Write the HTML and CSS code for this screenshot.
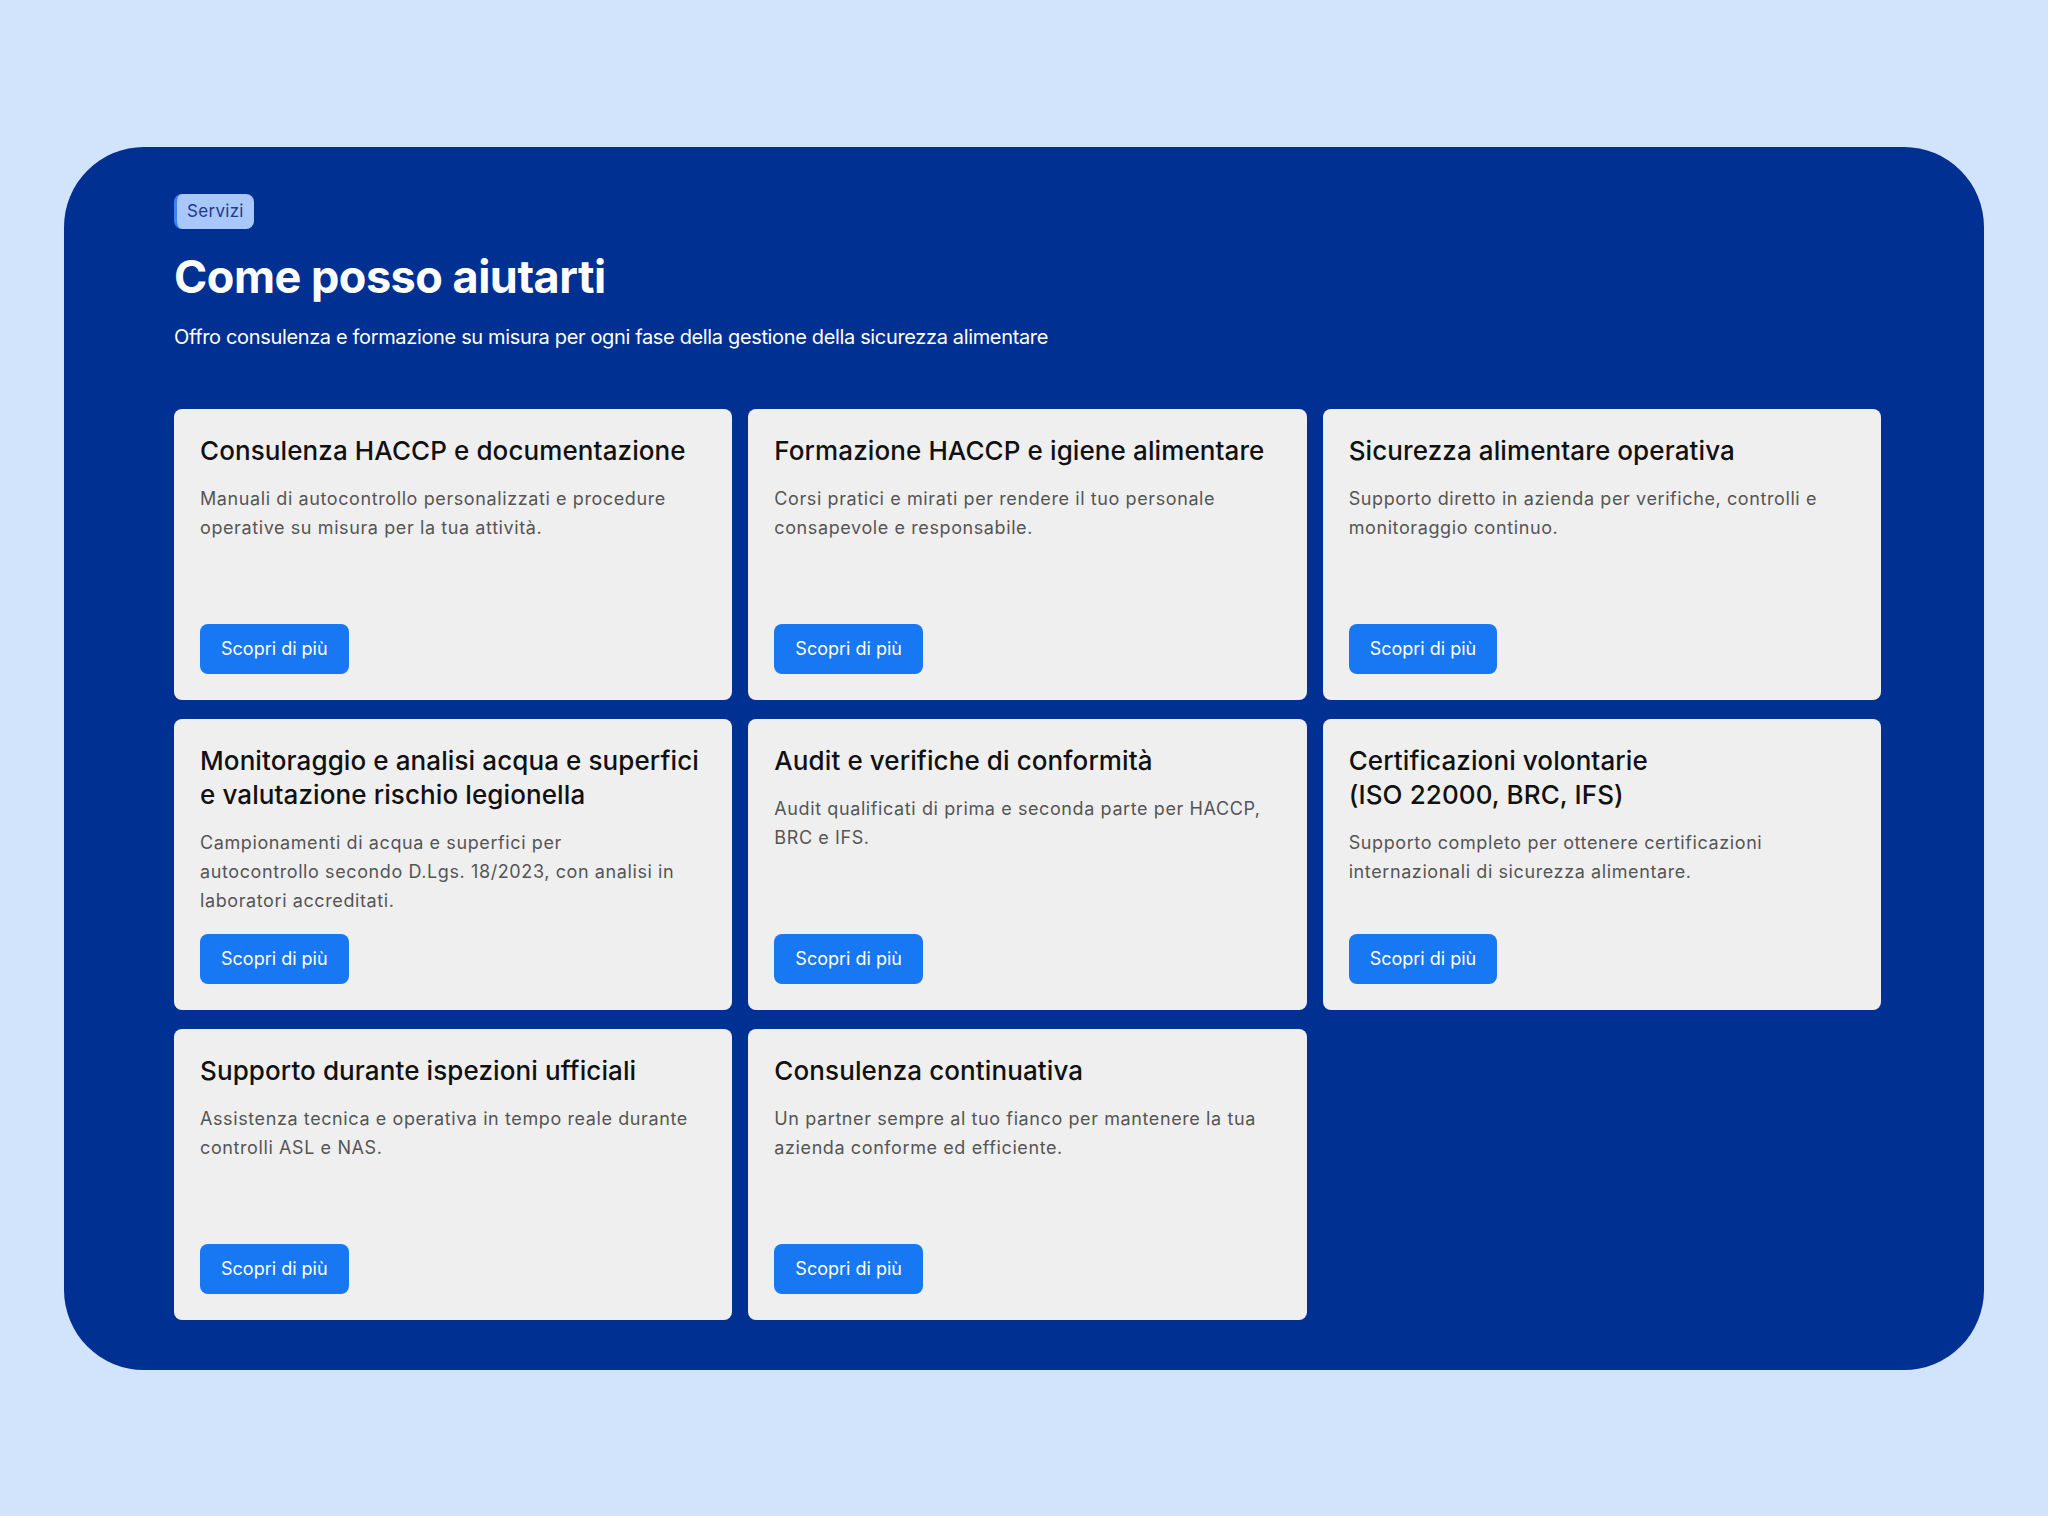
FILE: index.html
```html
<!DOCTYPE html>
<html lang="it">
<head>
<meta charset="utf-8">
<title>Servizi</title>
<link rel="stylesheet" href="styles.css">
</head>
<body>
<main class="page">
  <section class="panel">
    <span class="badge">Servizi</span>
    <h1 class="title">Come posso aiutarti</h1>
    <p class="subtitle">Offro consulenza e formazione su misura per ogni fase della gestione della sicurezza alimentare</p>
    <div class="grid">
      <article class="card">
        <h2 class="card-title">Consulenza HACCP e documentazione</h2>
        <p class="card-text">Manuali di autocontrollo personalizzati e procedure operative su misura per la tua attività.</p>
        <a class="btn" href="#">Scopri di più</a>
      </article>
      <article class="card">
        <h2 class="card-title">Formazione HACCP e igiene alimentare</h2>
        <p class="card-text">Corsi pratici e mirati per rendere il tuo personale consapevole e responsabile.</p>
        <a class="btn" href="#">Scopri di più</a>
      </article>
      <article class="card">
        <h2 class="card-title">Sicurezza alimentare operativa</h2>
        <p class="card-text">Supporto diretto in azienda per verifiche, controlli e monitoraggio continuo.</p>
        <a class="btn" href="#">Scopri di più</a>
      </article>
      <article class="card">
        <h2 class="card-title">Monitoraggio e analisi acqua e superfici<br>e valutazione rischio legionella</h2>
        <p class="card-text">Campionamenti di acqua e superfici per<br>autocontrollo secondo D.Lgs. 18/2023, con analisi in laboratori accreditati.</p>
        <a class="btn" href="#">Scopri di più</a>
      </article>
      <article class="card">
        <h2 class="card-title">Audit e verifiche di conformità</h2>
        <p class="card-text">Audit qualificati di prima e seconda parte per HACCP, BRC e IFS.</p>
        <a class="btn" href="#">Scopri di più</a>
      </article>
      <article class="card">
        <h2 class="card-title">Certificazioni volontarie<br>(ISO 22000, BRC, IFS)</h2>
        <p class="card-text">Supporto completo per ottenere certificazioni internazionali di sicurezza alimentare.</p>
        <a class="btn" href="#">Scopri di più</a>
      </article>
      <article class="card">
        <h2 class="card-title">Supporto durante ispezioni ufficiali</h2>
        <p class="card-text">Assistenza tecnica e operativa in tempo reale durante controlli ASL e NAS.</p>
        <a class="btn" href="#">Scopri di più</a>
      </article>
      <article class="card">
        <h2 class="card-title">Consulenza continuativa</h2>
        <p class="card-text">Un partner sempre al tuo fianco per mantenere la tua azienda conforme ed efficiente.</p>
        <a class="btn" href="#">Scopri di più</a>
      </article>
    </div>
  </section>
</main>
</body>
</html>
```

FILE: styles.css
```css
* {
  box-sizing: border-box;
}

html, body {
  margin: 0;
  padding: 0;
}

body {
  background: #d2e4fc;
  font-family: Inter, "Noto Sans", "Liberation Sans", sans-serif;
  color: #111;
}

.page {
  min-height: 100vh;
  display: flex;
  align-items: center;
  padding: 0 64px;
}

.panel {
  width: 100%;
  background: #003092;
  border-radius: 80px;
  padding: 47px 103px 50px 110px;
  display: flex;
  flex-direction: column;
  align-items: flex-start;
}

.badge {
  display: inline-flex;
  align-items: center;
  height: 35px;
  padding: 0 10px 0 10px;
  border-left: 3px solid #3d82f2;
  border-radius: 8px;
  background: #a8c7fa;
  color: #1e3a8a;
  font-size: 17px;
  letter-spacing: 0.3px;
}

.title {
  margin: 21px 0 0;
  color: #fff;
  font-size: 45px;
  font-weight: 700;
  line-height: 1.2;
  letter-spacing: -0.5px;
}

.subtitle {
  margin: 18px 0 0;
  color: #fff;
  font-size: 20px;
  line-height: 1.5;
  letter-spacing: -0.35px;
}

.grid {
  align-self: stretch;
  margin-top: 57px;
  display: grid;
  grid-template-columns: repeat(3, 1fr);
  grid-auto-rows: 1fr;
  gap: 19px 16px;
}

.card {
  background: #efefef;
  border-radius: 8px;
  padding: 25px 26px 26px;
  display: flex;
  flex-direction: column;
  align-items: flex-start;
}

.card-title {
  margin: 0;
  font-size: 26px;
  font-weight: 500;
  line-height: 34px;
  letter-spacing: 0.1px;
  color: #111;
}

.card-text {
  margin: 16px 0 19px;
  font-size: 18px;
  line-height: 29px;
  color: #555;
  letter-spacing: 0.6px;
}

.btn {
  margin-top: auto;
  display: inline-flex;
  align-items: center;
  justify-content: center;
  height: 50px;
  padding: 0 21px;
  background: #1877f2;
  color: #fff;
  border-radius: 8px;
  font-size: 18px;
  text-decoration: none;
  letter-spacing: 0;
}
```
